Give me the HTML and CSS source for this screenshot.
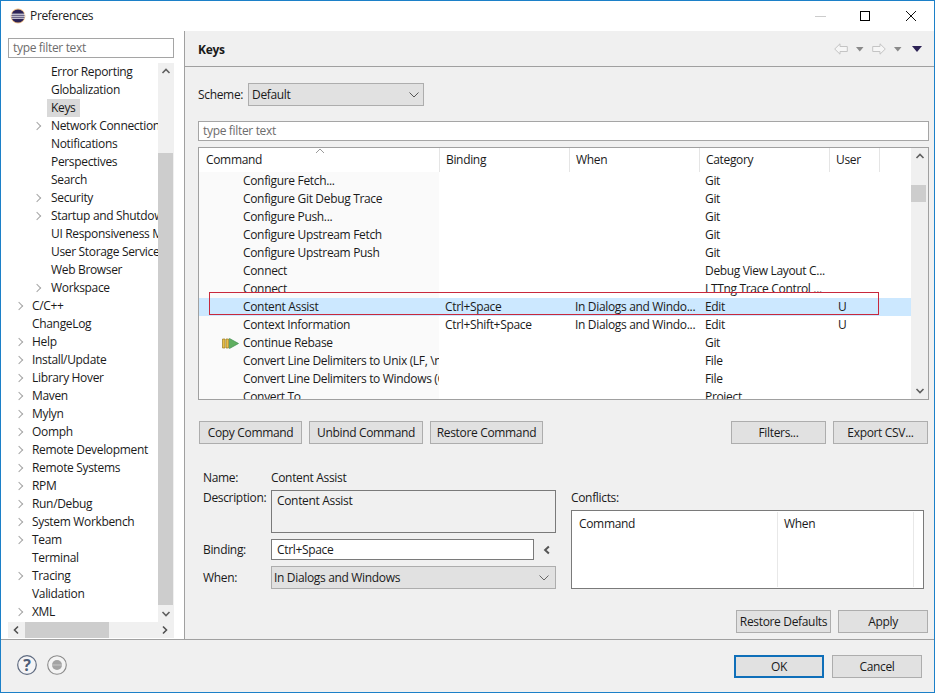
FILE: index.html
```html
<!DOCTYPE html>
<html lang="en">
<head>
<meta charset="utf-8">
<title>Preferences</title>
<link rel="stylesheet" href="styles.css">
</head>
<body>
<div class="window">
  <header class="titlebar">
    <svg class="appicon" width="16" height="16" viewBox="0 0 16 16"><circle cx="8" cy="8" r="7.4" fill="#f5c48a"/><circle cx="8" cy="8" r="6.6" fill="#2c2255"/><path d="M1 6.2h14M1 8.2h14M1.6 10.2h12.8" stroke="#fff" stroke-width="1"/></svg>
    <span class="wintitle">Preferences</span>
    <div class="winctl">
      <svg width="12" height="12" viewBox="0 0 12 12" class="ctl-min"><path d="M0 6.5h11" stroke="#ccc"/></svg>
      <svg width="12" height="12" viewBox="0 0 12 12" class="ctl-max"><rect x="1.5" y="1.5" width="9" height="9" fill="none" stroke="#000"/></svg>
      <svg width="12" height="12" viewBox="0 0 12 12" class="ctl-close"><path d="M1 1l10 10M11 1L1 11" stroke="#111" fill="none"/></svg>
    </div>
  </header>

  <div class="body">
    <aside class="side">
      <div class="input side-filter hint">type filter text</div>
      <div class="tree-wrap">
        <div class="tree">
          <div class="node l2">Error Reporting</div>
          <div class="node l2">Globalization</div>
          <div class="node l2"><span class="sel">Keys</span></div>
          <div class="node l2 kids">Network Connections</div>
          <div class="node l2">Notifications</div>
          <div class="node l2">Perspectives</div>
          <div class="node l2">Search</div>
          <div class="node l2 kids">Security</div>
          <div class="node l2 kids">Startup and Shutdown</div>
          <div class="node l2">UI Responsiveness Monitoring</div>
          <div class="node l2">User Storage Service</div>
          <div class="node l2">Web Browser</div>
          <div class="node l2 kids">Workspace</div>
          <div class="node l1 kids">C/C++</div>
          <div class="node l1">ChangeLog</div>
          <div class="node l1 kids">Help</div>
          <div class="node l1 kids">Install/Update</div>
          <div class="node l1 kids">Library Hover</div>
          <div class="node l1 kids">Maven</div>
          <div class="node l1 kids">Mylyn</div>
          <div class="node l1 kids">Oomph</div>
          <div class="node l1 kids">Remote Development</div>
          <div class="node l1 kids">Remote Systems</div>
          <div class="node l1 kids">RPM</div>
          <div class="node l1 kids">Run/Debug</div>
          <div class="node l1 kids">System Workbench</div>
          <div class="node l1 kids">Team</div>
          <div class="node l1">Terminal</div>
          <div class="node l1 kids">Tracing</div>
          <div class="node l1">Validation</div>
          <div class="node l1 kids">XML</div>
        </div>
        <div class="vbar tree-vbar">
          <svg class="chev" width="10" height="8" viewBox="0 0 10 8"><path d="M1.5 6L5 2.5 8.5 6" fill="none" stroke="#606060" stroke-width="1.6"/></svg>
          <div class="vtrack-tree"><div class="vthumb-tree"></div></div>
          <svg class="chev" width="10" height="8" viewBox="0 0 10 8"><path d="M1.5 2L5 5.5 8.5 2" fill="none" stroke="#606060" stroke-width="1.6"/></svg>
        </div>
      </div>
      <div class="hbar">
        <svg class="hchev" width="17" height="16" viewBox="0 0 17 16"><path d="M10 4.5L6.5 8l3.500 3.500" fill="none" stroke="#505050" stroke-width="1.6"/></svg>
        <div class="hthumb"></div>
        <svg class="hchev hchev-r" width="17" height="16" viewBox="0 0 17 16"><path d="M7 4.500L10.500 8 7 11.500" fill="none" stroke="#505050" stroke-width="1.6"/></svg>
      </div>
    </aside>

    <main class="main">
      <div class="pagehead">
        <h1 class="pagetitle">Keys</h1>
        <div class="navs">
          <svg width="14" height="12" viewBox="0 0 14 12"><path d="M.7 6L6 .8v2.700h7.300v5H6v2.700z" fill="#f6f6f6" stroke="#c4c4c4"/></svg>
          <svg class="drop" width="8" height="5" viewBox="0 0 8 5"><path d="M0 0h7.500L3.800 4.500z" fill="#8a8a8a"/></svg>
          <svg class="fwd" width="14" height="12" viewBox="0 0 14 12"><path d="M13.300 6L8 .8v2.700H.7v5H8v2.700z" fill="#f6f6f6" stroke="#c4c4c4"/></svg>
          <svg class="drop" width="8" height="5" viewBox="0 0 8 5"><path d="M0 0h7.500L3.800 4.500z" fill="#8a8a8a"/></svg>
          <svg class="menu" width="10" height="6" viewBox="0 0 10 6"><path d="M0 0h10L5 6z" fill="#2c2255"/></svg>
        </div>
      </div>

      <div class="content">
        <div class="scheme">
          <span class="scheme-label">Scheme:</span>
          <div class="combo scheme-combo"><span>Default</span>
            <svg width="10" height="6" viewBox="0 0 10 6"><path d="M.5.500L5 5 9.500.5" fill="none" stroke="#555"/></svg>
          </div>
        </div>

        <div class="input main-filter hint">type filter text</div>

        <div class="table">
          <div class="table-main">
            <div class="thead">
              <div class="th c1">Command<svg class="sort" width="10" height="6" viewBox="0 0 10 6"><path d="M1 5l4-4 4 4" fill="none" stroke="#9a9a9a"/></svg></div>
              <div class="th c2">Binding</div>
              <div class="th c3">When</div>
              <div class="th c4">Category</div>
              <div class="th c5">User</div>
            </div>
            <div class="tbody">
              <div class="row"><div class="td c1">Configure Fetch...</div><div class="td c2"></div><div class="td c3"></div><div class="td c4">Git</div><div class="td c5"></div></div>
              <div class="row"><div class="td c1">Configure Git Debug Trace</div><div class="td c2"></div><div class="td c3"></div><div class="td c4">Git</div><div class="td c5"></div></div>
              <div class="row"><div class="td c1">Configure Push...</div><div class="td c2"></div><div class="td c3"></div><div class="td c4">Git</div><div class="td c5"></div></div>
              <div class="row"><div class="td c1">Configure Upstream Fetch</div><div class="td c2"></div><div class="td c3"></div><div class="td c4">Git</div><div class="td c5"></div></div>
              <div class="row"><div class="td c1">Configure Upstream Push</div><div class="td c2"></div><div class="td c3"></div><div class="td c4">Git</div><div class="td c5"></div></div>
              <div class="row"><div class="td c1">Connect</div><div class="td c2"></div><div class="td c3"></div><div class="td c4">Debug View Layout C...</div><div class="td c5"></div></div>
              <div class="row"><div class="td c1">Connect</div><div class="td c2"></div><div class="td c3"></div><div class="td c4">LTTng Trace Control ...</div><div class="td c5"></div></div>
              <div class="row selected"><div class="td c1">Content Assist</div><div class="td c2">Ctrl+Space</div><div class="td c3">In Dialogs and Windo...</div><div class="td c4">Edit</div><div class="td c5">U</div></div>
              <div class="row"><div class="td c1">Context Information</div><div class="td c2">Ctrl+Shift+Space</div><div class="td c3">In Dialogs and Windo...</div><div class="td c4">Edit</div><div class="td c5">U</div></div>
              <div class="row"><div class="td c1 has-icon"><svg class="rowicon" width="17" height="11" viewBox="0 0 17 11"><path d="M.5 1h2.500v9H.5zM4 1h2.500v9H4z" fill="#e8c04a" stroke="#9a7a20" stroke-width=".7"/><path d="M7.500.5L16.500 5.500 7.500 10.500z" fill="#5fae5f" stroke="#3f8f4f" stroke-width=".7"/></svg>Continue Rebase</div><div class="td c2"></div><div class="td c3"></div><div class="td c4">Git</div><div class="td c5"></div></div>
              <div class="row"><div class="td c1">Convert Line Delimiters to Unix (LF, \n, 0A, &para;)</div><div class="td c2"></div><div class="td c3"></div><div class="td c4">File</div><div class="td c5"></div></div>
              <div class="row"><div class="td c1">Convert Line Delimiters to Windows (CRLF)</div><div class="td c2"></div><div class="td c3"></div><div class="td c4">File</div><div class="td c5"></div></div>
              <div class="row"><div class="td c1">Convert To</div><div class="td c2"></div><div class="td c3"></div><div class="td c4">Project</div><div class="td c5"></div></div>
            </div>
          </div>
          <div class="vbar table-vbar">
            <svg class="chev" width="10" height="8" viewBox="0 0 10 8"><path d="M1.500 6L5 2.500 8.500 6" fill="none" stroke="#606060" stroke-width="1.6"/></svg>
            <div class="vtrack-table"><div class="vthumb-table"></div></div>
            <svg class="chev" width="10" height="8" viewBox="0 0 10 8"><path d="M1.500 2L5 5.500 8.500 2" fill="none" stroke="#606060" stroke-width="1.6"/></svg>
          </div>
          <div class="redbox"></div>
        </div>

        <div class="btnrow">
          <button class="btn b-copy">Copy Command</button>
          <button class="btn b-unbind">Unbind Command</button>
          <button class="btn b-restore">Restore Command</button>
          <span class="spacer"></span>
          <button class="btn b-filters">Filters...</button>
          <button class="btn b-export">Export CSV...</button>
        </div>

        <div class="details">
          <div class="form">
            <div class="f-name"><span class="f-label">Name:</span><span>Content Assist</span></div>
            <div class="f-desc"><span class="f-label">Description:</span><div class="descbox">Content Assist</div></div>
            <div class="f-bind"><span class="f-label">Binding:</span><div class="bindbox">Ctrl+Space</div>
              <svg class="bindarrow" width="10" height="10" viewBox="0 0 8 8"><path d="M5.500 1.200L2.500 4l3 2.800" fill="none" stroke="#555" stroke-width="1.600"/></svg>
            </div>
            <div class="f-when"><span class="f-label">When:</span>
              <div class="combo when-combo"><span>In Dialogs and Windows</span>
                <svg width="10" height="6" viewBox="0 0 10 6"><path d="M.5.500L5 5 9.500.5" fill="none" stroke="#666"/></svg>
              </div>
            </div>
          </div>
          <div class="conflicts">
            <div class="conf-label">Conflicts:</div>
            <div class="conf-table">
              <div class="conf-c1">Command</div>
              <div class="conf-c2">When</div>
              <div class="conf-c3"></div>
            </div>
          </div>
        </div>

        <div class="actions">
          <button class="btn b-defaults">Restore Defaults</button>
          <button class="btn b-apply">Apply</button>
        </div>
      </div>
    </main>
  </div>

  <footer class="footer">
    <svg class="roundicon" width="20" height="20" viewBox="0 0 20 20"><circle cx="10" cy="10" r="9.300" fill="#f4f4f6" stroke="#5f6b80" stroke-width="1.200"/><text x="10" y="15.500" class="qmark">?</text></svg>
    <svg class="roundicon second" width="20" height="20" viewBox="0 0 20 20"><circle cx="10" cy="10" r="9.300" fill="#f4f4f4" stroke="#8a8a8a" stroke-width="1.100"/><circle cx="10" cy="10" r="5" fill="#a3a3a3"/><path d="M5 10h10" stroke="#c8c8c8"/></svg>
    <span class="spacer"></span>
    <button class="btn b-ok">OK</button>
    <button class="btn b-cancel">Cancel</button>
  </footer>
</div>
</body>
</html>
```
FILE: styles.css
```css
* { box-sizing: border-box; }
html, body { margin: 0; padding: 0; }
body {
  width: 935px; height: 693px; overflow: hidden; background: #fff;
  font: 12px/16px "Open Sans", "Noto Sans", sans-serif; color: #1a1a1a;
  letter-spacing: -0.33px;
}
.window {
  width: 935px; height: 693px; border: 1px solid #1c80c8;
  display: flex; flex-direction: column; background: #f0f0f0;
}
.titlebar {
  height: 30px; flex: none; background: #fff; display: flex; align-items: center;
  padding: 0 0 0 9px;
}
.appicon { margin-right: 4px; }
.wintitle { color: #222; }
.winctl { margin-left: auto; display: flex; align-items: center; padding-right: 17px; }
.ctl-max { margin-left: 32px; }
.ctl-close { margin-left: 34px; }

.body { display: flex; height: 608px; flex: none; }
.side { width: 183px; flex: none; background: #fff; padding: 7px 9px 0 7px; }
.input { background: #fff; border: 1px solid #a5a5a5; height: 20px; line-height: 18px; padding-left: 4px; }
.hint { color: #6d6d6d; }
.side-filter { width: 166px; }
.tree-wrap { display: flex; margin-top: 5px; height: 559px; }
.tree { width: 150px; height: 559px; overflow: hidden; flex: none; }
.node { height: 18px; line-height: 18px; white-space: nowrap; position: relative; overflow: hidden; }
.l2 { padding-left: 43px; }
.l1 { padding-left: 24px; }
.sel { display: inline-block; background: #d9d9d9; margin-left: -4px; padding: 0 4px; height: 18px; }
.kids::before {
  content: ""; position: absolute; width: 5px; height: 5px; top: 6px;
  border-top: 1.500px solid #a6a6a6; border-right: 1.500px solid #a6a6a6; transform: rotate(45deg);
}
.l2.kids::before { left: 26px; }
.l1.kids::before { left: 8px; }

.vbar { display: flex; flex-direction: column; align-items: center; background: #f0f0f0; }
.chev { flex: none; margin: 4px 0; }
.tree-vbar { width: 16px; flex: none; }
.vtrack-tree { flex: 1; width: 15px; align-self: flex-start; padding-top: 74px; padding-bottom: 1px; }
.vthumb-tree { height: 100%; background: #cdcdcd; }
.hbar { width: 166px; height: 16px; background: #f0f0f0; display: flex; align-items: center; }
.hchev { flex: none; }
.hthumb { width: 84px; height: 16px; background: #cdcdcd; }
.hchev-r { margin-left: auto; margin-right: 1px; }

.main { flex: 1; min-width: 0; border-left: 1px solid #a0a0a0; background: #f0f0f0; display: flex; flex-direction: column; }
.pagehead { height: 36px; flex: none; border-bottom: 1px solid #a0a0a0; display: flex; align-items: center; padding: 0 12px 0 13px; }
.pagetitle { font-size: 12px; font-weight: 700; margin: 3px 0 0; color: #1a1a1a; }
.navs { margin-left: auto; margin-top: 1px; display: flex; align-items: center; }
.drop { margin-left: 8px; }
.fwd { margin-left: 8px; }
.menu { margin-left: 10px; }

.content { padding: 16px 5px 0 13px; flex: 1; }
.scheme { display: flex; align-items: center; height: 23px; }
.scheme-label { width: 50px; }
.combo { background: #e1e1e1; border: 1px solid #adadad; height: 23px; display: flex; align-items: center; justify-content: space-between; padding: 0 4px 0 3px; }
.scheme-combo { width: 176px; }
.main-filter { margin-top: 15px; width: 731px; }

.table { margin-top: 6px; width: 731px; height: 253px; border: 1px solid #a0a0a0; background: #fff; display: flex; position: relative; }
.table-main { width: 712px; flex: none; }
.thead { display: flex; height: 24px; background: #fff; }
.th { height: 24px; line-height: 24px; position: relative; border-right: 1px solid #e5e5e5; padding-left: 6px; }
.th.c1 { padding-left: 7px; }
.c1 { width: 241px; }
.c2, .c3, .c4 { width: 130px; }
.c5 { width: 50px; }
.sort { position: absolute; left: 116px; top: 0; }
.tbody { height: 227px; overflow: hidden; }
.row { display: flex; height: 18px; }
.td { height: 18px; line-height: 18px; white-space: nowrap; overflow: hidden; padding-left: 5px; }
.td.c1 { padding-left: 44px; background: #fafafa; border-right: 1px solid #fff; position: relative; }
.td.c5 { padding-left: 8px; }
.selected, .selected .td.c1 { background: #cce8ff; border-color: #cce8ff; }
.rowicon { position: absolute; left: 23px; top: 4px; }
.table-vbar { width: 17px; flex: none; }
.vtrack-table { flex: 1; width: 15px; align-self: flex-start; padding-top: 21px; }
.vthumb-table { height: 17px; background: #cdcdcd; }
.redbox { position: absolute; left: 10px; top: 144px; width: 670px; height: 23px; border: 1px solid #c8283c; pointer-events: none; }

.btn {
  font: inherit; letter-spacing: inherit; color: #1a1a1a; background: #e1e1e1; border: 1px solid #adadad;
  height: 23px; padding: 0; flex: none; display: block;
}
.btnrow { display: flex; margin-top: 21px; padding: 0 1px; }
.b-copy { width: 103px; }
.b-unbind { width: 114px; margin-left: 7px; }
.b-restore { width: 113px; margin-left: 7px; }
.spacer { flex: 1; }
.b-filters { width: 95px; }
.b-export { width: 95px; margin-left: 7px; }

.details { display: flex; margin-top: 25px; padding-left: 5px; }
.form { width: 353px; flex: none; }
.f-label { width: 68px; flex: none; }
.f-name { display: flex; height: 18px; line-height: 18px; }
.f-desc { display: flex; margin-top: 3px; }
.descbox { width: 285px; height: 43px; border: 1px solid #7a7a7a; padding: 2px 5px; background: #f0f0f0; }
.f-bind { display: flex; align-items: center; margin-top: 6px; height: 21px; }
.bindbox { width: 263px; height: 21px; border: 1px solid #7a7a7a; background: #fff; line-height: 19px; padding-left: 5px; }
.bindarrow { margin-left: 8px; }
.f-when { display: flex; align-items: center; margin-top: 6px; height: 23px; }
.when-combo { width: 285px; padding-left: 2px; }
.when-combo svg { margin-right: 2px; }
.conflicts { width: 353px; margin-left: 15px; padding-top: 22px; }
.conf-label { height: 14px; line-height: 14px; }
.conf-table { margin-top: 5px; height: 79px; border: 1px solid #7a7a7a; background: #fff; display: flex; padding-top: 1px; }
.conf-c1 { width: 206px; padding: 4px 0 0 7px; border-right: 1px solid #e8e8e8; height: 75px; }
.conf-c2 { width: 136px; padding: 4px 0 0 6px; border-right: 1px solid #e8e8e8; height: 75px; }
.conf-c3 { flex: 1; }

.actions { display: flex; justify-content: flex-end; margin-top: 21px; padding-right: 1px; }
.b-defaults { width: 95px; }
.b-apply { width: 90px; margin-left: 7px; }

.footer { height: 53px; flex: none; border-top: 1px solid #a0a0a0; display: flex; align-items: flex-start; padding: 15px 12px 0 16px; background: #f0f0f0; }
.second { margin-left: 10px; }
.qmark { font-size: 16px; font-weight: 700; fill: #4d5c78; text-anchor: middle; }
.b-ok { width: 90px; border: 2px solid #0f6fb9; }
.b-cancel { width: 90px; margin-left: 8px; }
```
